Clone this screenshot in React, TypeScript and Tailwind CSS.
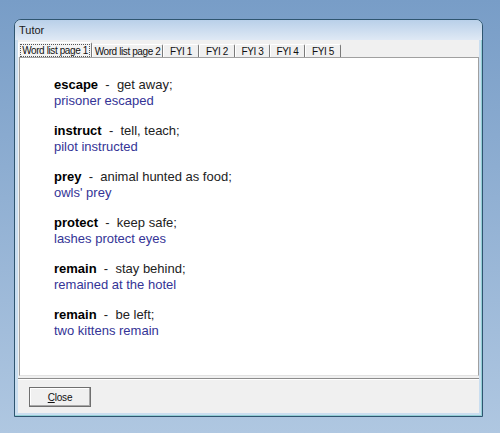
const entries = [
  { word: "escape", def: "get away;", ex: "prisoner escaped" },
  { word: "instruct", def: "tell, teach;", ex: "pilot instructed" },
  { word: "prey", def: "animal hunted as food;", ex: "owls' prey" },
  { word: "protect", def: "keep safe;", ex: "lashes protect eyes" },
  { word: "remain", def: "stay behind;", ex: "remained at the hotel" },
  { word: "remain", def: "be left;", ex: "two kittens remain" },
];

const tabs = [
  { label: "Word list page 1", width: "w-[74px]", selected: true },
  { label: "Word list page 2", width: "w-[71px]" },
  { label: "FYI 1", width: "w-[36px]" },
  { label: "FYI 2", width: "w-[36px]" },
  { label: "FYI 3", width: "w-[35px]" },
  { label: "FYI 4", width: "w-[35px]" },
  { label: "FYI 5", width: "w-[36px]" },
];

function TabStrip() {
  return (
    <div className="flex h-[17px] items-end pt-[2px] text-[10px] tracking-[-0.4px]">
      {tabs.map((t) =>
        t.selected ? (
          <div
            key={t.label}
            className={`${t.width} flex h-[15px] items-center justify-center overflow-hidden rounded-t-[2px] border-t border-l border-r border-t-white border-l-white border-r-[#7a7a7a] bg-[#f4f4f4]`}
          >
            <span className="border border-dotted border-[#555] px-[1px] leading-[11px] whitespace-nowrap">
              {t.label}
            </span>
          </div>
        ) : (
          <div
            key={t.label}
            className={`${t.width} flex h-[13px] items-center justify-center overflow-hidden rounded-t-[2px] border-t border-l border-r border-t-white border-l-white border-r-[#7a7a7a] whitespace-nowrap`}
          >
            {t.label}
          </div>
        )
      )}
    </div>
  );
}

function WordList() {
  return (
    <div className="flex flex-col gap-[14px] pl-[34px] pt-[19px] font-['Liberation_Sans',Arial,sans-serif] text-[13px] leading-[16px]">
      {entries.map((e, i) => (
        <div key={i} className="flex flex-col">
          <div className="whitespace-pre text-[#222]">
            <span className="font-bold text-black">{e.word}</span>
            {"  -  "}
            {e.def}
          </div>
          <div className="text-[#343496]">{e.ex}</div>
        </div>
      ))}
    </div>
  );
}

export default function App() {
  return (
    <div className="h-[433px] w-[500px] overflow-hidden bg-gradient-to-b from-[#789dc7] to-[#afc7e1] pl-[14px] pt-[19px]">
      <div className="flex h-[398px] w-[469px] flex-col overflow-hidden rounded-t-[7px] border border-[#2f5570] bg-[#cadef0] shadow-[inset_-1px_-1px_0_#93cfd5]">
        <div className="flex h-[20px] items-center bg-gradient-to-b from-[#b9d0e9] to-[#dfe9f5] pl-[4px] font-['Liberation_Sans',Arial,sans-serif] text-[11px] text-[#1b1b1b]">
          Tutor
        </div>
        <div className="mx-[3px] mb-[3px] flex flex-1 flex-col bg-[#f0f0f0] font-['Liberation_Sans',Arial,sans-serif] text-[#111]">
          <TabStrip />
          <div className="ml-[1px] h-[319px] border-t border-l border-r border-b border-t-[#a0a0a0] border-l-[#a0a0a0] border-r-[#a0a0a0] border-b-[#e2e2e2] bg-white">
            <WordList />
          </div>
          <div className="mt-[2px] h-[2px] border-t border-b border-t-[#8c8c8c] border-b-white" />
          <div className="flex flex-1 items-start pl-[11px] pt-[7px]">
            <button
              type="button"
              className="flex h-[20px] w-[62px] items-center justify-center border border-[#6f6f6f] bg-[#f0f0f0] text-[10px] tracking-[-0.2px] shadow-[inset_-1px_-1px_0_#a8a8a8,inset_1px_1px_0_#fff]"
            >
              <span>
                <span className="underline">C</span>lose
              </span>
            </button>
          </div>
        </div>
      </div>
    </div>
  );
}
